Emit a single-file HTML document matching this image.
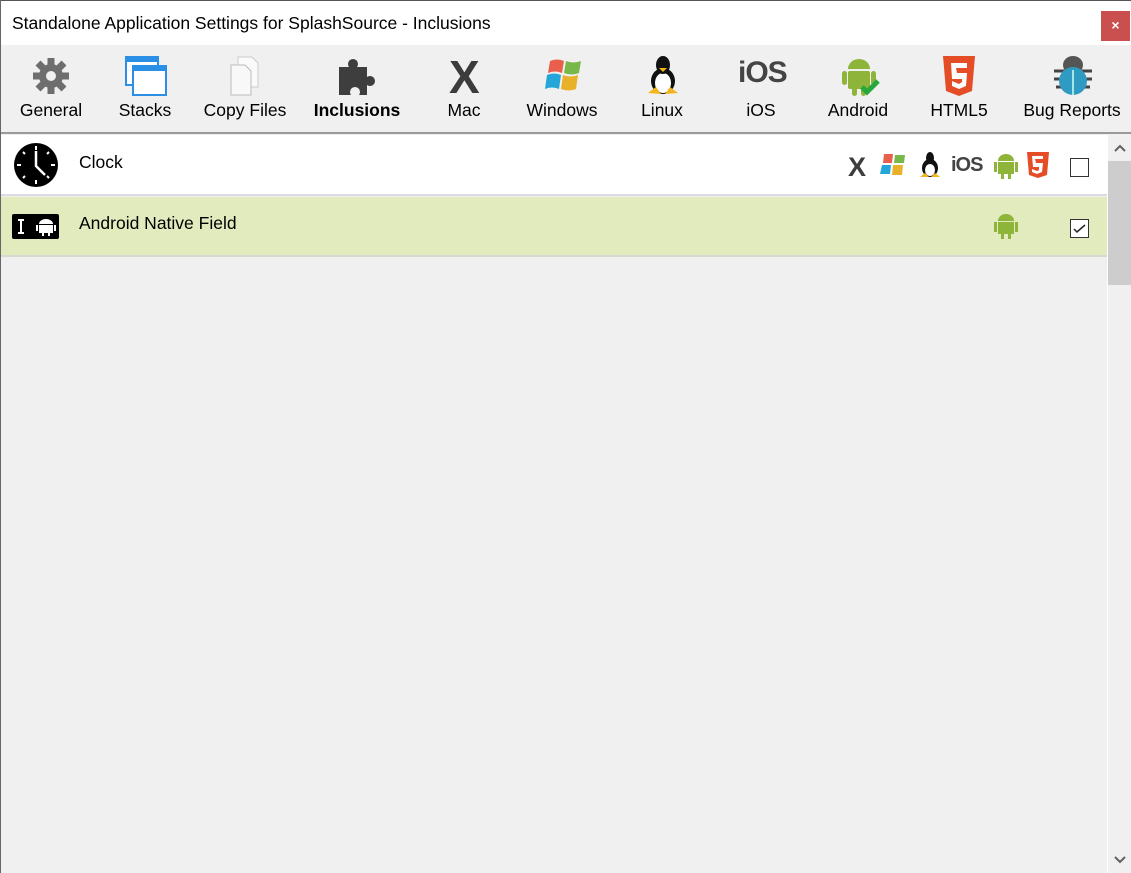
<!DOCTYPE html>
<html><head><meta charset="utf-8"><style>
*{margin:0;padding:0;box-sizing:border-box}
body{width:1131px;height:873px;overflow:hidden;background:#f0f0f0;font-family:"Liberation Sans",sans-serif;position:relative;color:#000}
.abs{position:absolute}
#title{left:0;top:0;width:1131px;height:45px;background:#fff;border-top:1px solid #555;border-left:1px solid #777}
#title span{position:absolute;left:11px;top:12px;font-size:17.5px}
#close{left:1101px;top:11px;width:29px;height:30px;background:#c9504f;color:#fff;font-size:14px;font-weight:bold;text-align:center;line-height:29px}
#tb{left:0;top:45px;width:1131px;height:89px;background:#f0f0f0;border-bottom:2px solid #9a9a9a;border-left:1px solid #777}
.lab{position:absolute;top:100px;font-size:17.5px;transform:translateX(-50%);white-space:nowrap}
.ic{position:absolute;top:55px}
#row1{left:1px;top:135px;width:1106px;height:61px;background:#fff;border-bottom:2px solid #dcdce0}
#row2{left:1px;top:197px;width:1106px;height:60px;background:#e1ebbd;border-bottom:2px solid #d8d8d0}
.rt{position:absolute;left:78px;font-size:17.5px}
.cb{position:absolute;width:19px;height:19px;border:1px solid #333;background:#fff}
#sb{left:1107px;top:135px;width:24px;height:738px;background:#f0f0f0;border-left:1px solid #fff}
#thumb{left:1108px;top:161px;width:23px;height:124px;background:#cdcdcd}
#lb{left:0;top:0;width:1px;height:873px;background:#666}
</style></head><body>
<div id="title" class="abs"><span>Standalone Application Settings for SplashSource - Inclusions</span></div>
<div id="close" class="abs">×</div>
<div id="tb" class="abs"></div>

<svg class="ic" style="left:31px" width="40" height="42" viewBox="0 0 40 42"><g fill="#6e6e6e"><circle cx="20" cy="21" r="12"/><g stroke="#6e6e6e" stroke-width="7"><line x1="20" y1="3" x2="20" y2="39"/><line x1="2" y1="21" x2="38" y2="21"/><line x1="7" y1="8" x2="33" y2="34"/><line x1="33" y1="8" x2="7" y2="34"/></g></g><circle cx="20" cy="21" r="5" fill="#f0f0f0"/></svg>
<svg class="ic" style="left:124px" width="44" height="42"><rect x="2" y="2" width="32" height="28" fill="#fff" stroke="#2b8fe6" stroke-width="2"/><rect x="2" y="2" width="32" height="5" fill="#2b8fe6"/><rect x="9" y="11" width="33" height="29" fill="#fff" stroke="#2b8fe6" stroke-width="2"/><rect x="9" y="11" width="33" height="5" fill="#2b8fe6"/></svg>
<svg class="ic" style="left:228px" width="36" height="42"><path d="M10 2h14l6 6v24H10z" fill="#fafafa" stroke="#ccc"/><path d="M3 10h14l6 6v24H3z" fill="#f8f8f8" stroke="#bbb"/></svg>
<svg class="ic" style="left:335px" width="44" height="42"><path d="M4 12h10a5 5 0 1 1 8 0h10v10a5 5 0 1 1 0 8v10H24a5 5 0 1 0-8 0H4z" fill="#3e3e3e"/></svg>
<div class="ic" style="left:449px;top:50px;font-size:46px;font-weight:bold;color:#3c3c3c;font-family:'Liberation Sans'">X</div>
<svg class="ic" style="left:543px" width="42" height="42"><path d="M7 6q7-3 14 0l-2 12q-7-3-14 0z" fill="#e8604c"/><path d="M23 6q7 3 15 0l-2 12q-7 3-15 0z" fill="#78b84a"/><path d="M4 20q7-3 14 0l-2 14q-7-3-14 0z" fill="#25a6d8"/><path d="M20 20q7 3 15 0l-2 14q-7 3-15 0z" fill="#e8b12a"/></svg>
<svg class="ic" style="left:646px" width="34" height="42"><ellipse cx="17" cy="26" rx="12" ry="13" fill="#111"/><ellipse cx="17" cy="28" rx="8" ry="10" fill="#fff"/><ellipse cx="17" cy="10" rx="7" ry="9" fill="#111"/><path d="M13 13h8l-4 4z" fill="#f3b51c"/><path d="M2 38l8-6 5 7zM32 38l-8-6-5 7z" fill="#f3b51c"/></svg>
<div class="ic" style="left:738px;top:56px;font-size:30px;font-weight:bold;color:#444;letter-spacing:-1px">iOS</div>
<svg class="ic" style="left:840px" width="44" height="42"><path d="M8 14a11 10 0 0 1 22 0z" fill="#8fb43a"/><rect x="8" y="16" width="22" height="18" rx="2" fill="#8fb43a"/><rect x="2" y="16" width="5" height="14" rx="2.5" fill="#8fb43a"/><rect x="31" y="16" width="5" height="14" rx="2.5" fill="#8fb43a"/><rect x="12" y="32" width="5" height="9" rx="2.5" fill="#8fb43a"/><rect x="21" y="32" width="5" height="9" rx="2.5" fill="#8fb43a"/><path d="M22 32l5 5 11-11" stroke="#27a83a" stroke-width="5" fill="none"/></svg>
<svg class="ic" style="left:941px" width="36" height="42"><path d="M2 1h32l-3 35-13 5-13-5z" fill="#e44d26"/><path d="M10 8h16v5H15l1 5h10l-1 13-7 3-7-3v-5l7 3 3-2v-3H11z" fill="#fff"/></svg>
<svg class="ic" style="left:1052px" width="44" height="42"><g stroke="#444" stroke-width="3"><line x1="2" y1="16" x2="40" y2="16"/><line x1="2" y1="24" x2="40" y2="24"/><line x1="4" y1="32" x2="38" y2="32"/></g><ellipse cx="21" cy="10" rx="10" ry="9" fill="#555"/><ellipse cx="21" cy="26" rx="14" ry="14" fill="#2f9bc3"/><line x1="21" y1="15" x2="21" y2="40" stroke="#cfe" stroke-width="1.5"/></svg>

<div class="lab" style="left:51px">General</div>
<div class="lab" style="left:145px">Stacks</div>
<div class="lab" style="left:245px">Copy Files</div>
<div class="lab" style="left:357px;font-weight:bold">Inclusions</div>
<div class="lab" style="left:464px">Mac</div>
<div class="lab" style="left:562px">Windows</div>
<div class="lab" style="left:662px">Linux</div>
<div class="lab" style="left:761px">iOS</div>
<div class="lab" style="left:858px">Android</div>
<div class="lab" style="left:959px">HTML5</div>
<div class="lab" style="left:1072px">Bug Reports</div>

<div id="row1" class="abs">
 <svg style="position:absolute;left:12px;top:7px" width="46" height="46"><circle cx="23" cy="23" r="22" fill="#000"/><g stroke="#fff" stroke-width="2"><line x1="23" y1="4" x2="23" y2="8"/><line x1="23" y1="38" x2="23" y2="42"/><line x1="4" y1="23" x2="8" y2="23"/><line x1="38" y1="23" x2="42" y2="23"/><line x1="10" y1="10" x2="12" y2="12"/><line x1="36" y1="10" x2="34" y2="12"/><line x1="10" y1="36" x2="12" y2="34"/><line x1="36" y1="36" x2="34" y2="34"/></g><path d="M23 9v15l9 9" stroke="#fff" stroke-width="2.5" fill="none"/></svg>
 <div class="rt" style="top:17px">Clock</div>
 <div style="position:absolute;left:847px;top:17px;font-size:27px;font-weight:bold;color:#3c3c3c">X</div>
 <svg style="position:absolute;left:878px;top:17px" width="30" height="26"><path d="M5 2h9l-1 9H4z" fill="#e8604c"/><path d="M16 3h10l-1 8h-10z" fill="#78b84a"/><path d="M3 13h9l-1 9H1z" fill="#25a6d8"/><path d="M14 13h10l-1 10H13z" fill="#e8b12a"/></svg>
 <svg style="position:absolute;left:918px;top:16px" width="22" height="28"><ellipse cx="11" cy="17" rx="8" ry="9" fill="#111"/><ellipse cx="11" cy="19" rx="5" ry="6" fill="#fff"/><ellipse cx="11" cy="7" rx="4" ry="6" fill="#111"/><path d="M1 26l5-4 4 4zM21 26l-5-4-4 4z" fill="#f3b51c"/></svg>
 <div style="position:absolute;left:950px;top:19px;font-size:20px;font-weight:bold;color:#444;letter-spacing:-1px">iOS</div>
 <svg style="position:absolute;left:992px;top:17px" width="26" height="28"><path d="M5 9a8 7 0 0 1 16 0z" fill="#8fb43a"/><rect x="5" y="10" width="16" height="12" fill="#8fb43a"/><rect x="1" y="10" width="3" height="10" fill="#8fb43a"/><rect x="22" y="10" width="3" height="10" fill="#8fb43a"/><rect x="8" y="21" width="3" height="6" fill="#8fb43a"/><rect x="15" y="21" width="3" height="6" fill="#8fb43a"/></svg>
 <svg style="position:absolute;left:1025px;top:16px" width="24" height="28"><path d="M1 1h22l-2 23-9 3-9-3z" fill="#e44d26"/><path d="M6 5h11v3H9l1 4h7l-1 9-5 2-5-2v-3l5 2 2-1v-3H7z" fill="#fff"/></svg>
 <div class="cb" style="left:1069px;top:23px"></div>
</div>
<div id="row2" class="abs">
 <svg style="position:absolute;left:11px;top:17px" width="47" height="25"><rect width="47" height="25" rx="2" fill="#000"/><path d="M6 6h6M9 6v13M6 19h6" stroke="#fff" stroke-width="2"/><path d="M27 10a7 5 0 0 1 14 0z" fill="#fff"/><rect x="27" y="11" width="14" height="8" fill="#fff"/><rect x="24" y="11" width="2" height="6" fill="#fff"/><rect x="42" y="11" width="2" height="6" fill="#fff"/><rect x="30" y="18" width="2" height="4" fill="#fff"/><rect x="36" y="18" width="2" height="4" fill="#fff"/></svg>
 <div class="rt" style="top:16px">Android Native Field</div>
 <svg style="position:absolute;left:992px;top:15px" width="26" height="28"><path d="M5 9a8 7 0 0 1 16 0z" fill="#8fb43a"/><rect x="5" y="10" width="16" height="12" fill="#8fb43a"/><rect x="1" y="10" width="3" height="10" fill="#8fb43a"/><rect x="22" y="10" width="3" height="10" fill="#8fb43a"/><rect x="8" y="21" width="3" height="6" fill="#8fb43a"/><rect x="15" y="21" width="3" height="6" fill="#8fb43a"/></svg>
 <div class="cb" style="left:1069px;top:22px"><svg width="17" height="17" style="position:absolute;left:0;top:0"><path d="M3 9l3 3 8-7" stroke="#222" stroke-width="1.5" fill="none"/></svg></div>
</div>
<div id="sb" class="abs"></div>
<div id="thumb" class="abs"></div>
<svg class="abs" style="left:1113px;top:143px" width="14" height="10"><path d="M2 8l5-5 5 5" stroke="#606060" stroke-width="2" fill="none"/></svg>
<svg class="abs" style="left:1113px;top:855px" width="14" height="10"><path d="M2 2l5 5 5-5" stroke="#606060" stroke-width="2" fill="none"/></svg>
<div id="lb" class="abs"></div>
</body></html>
